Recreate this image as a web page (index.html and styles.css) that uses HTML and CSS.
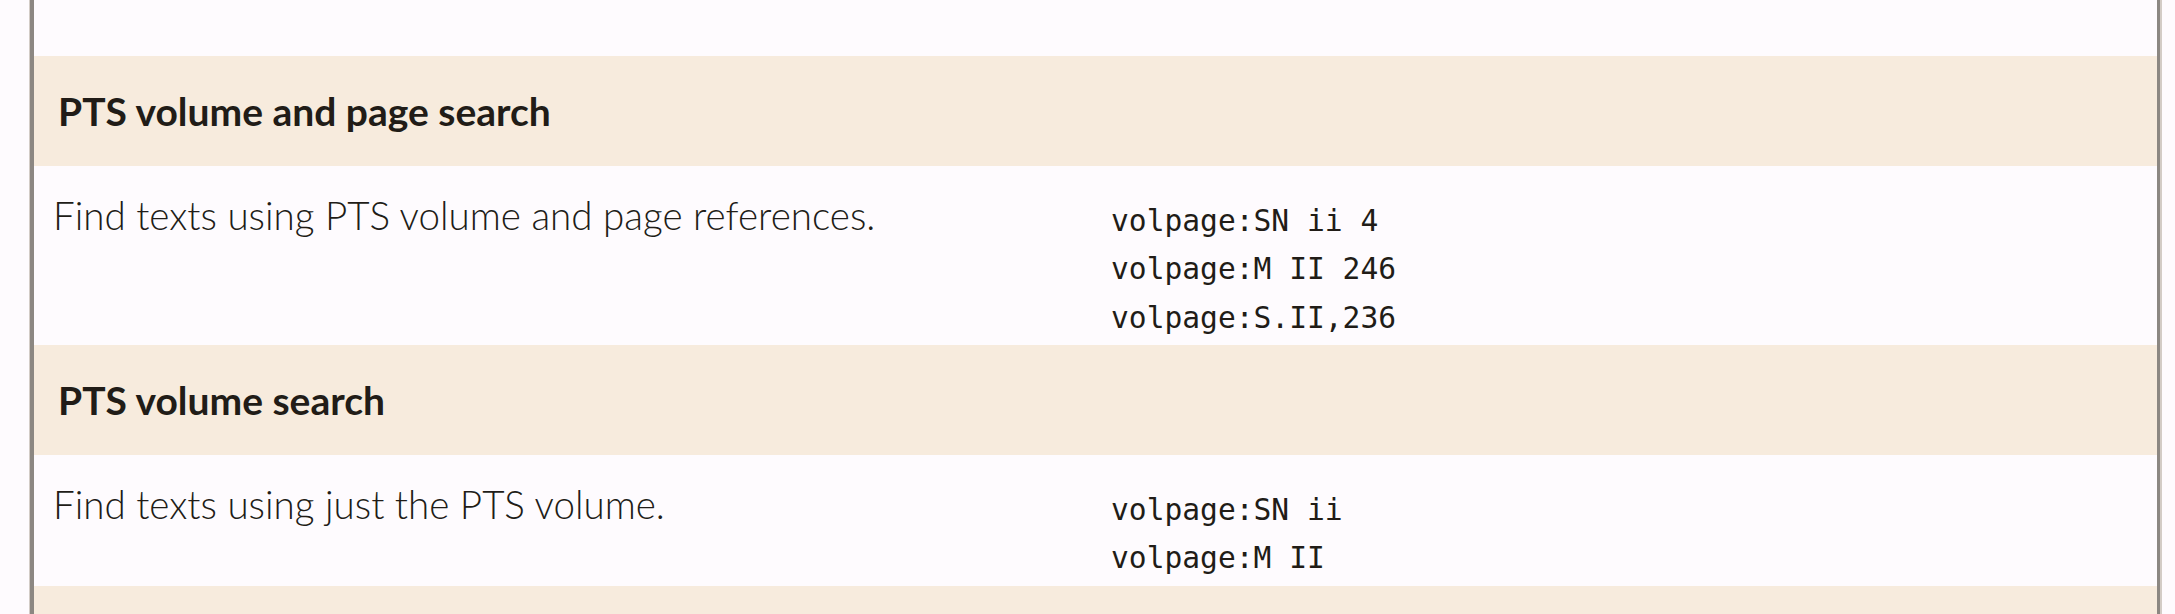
FILE: index.html
```
<!DOCTYPE html>
<html lang="en">
<head>
<meta charset="utf-8">
<title>Search help</title>
<link rel="stylesheet" href="styles.css">
</head>
<body>
<div class="frame">
  <div class="panel">
    <div class="row-tail"></div>
    <div class="head"><h3>PTS volume and page search</h3></div>
    <div class="row">
      <p class="desc">Find texts using PTS volume and page references.</p>
      <div class="examples">
        <code>volpage:SN ii 4</code>
        <code>volpage:M II 246</code>
        <code>volpage:S.II,236</code>
      </div>
    </div>
    <div class="head"><h3>PTS volume search</h3></div>
    <div class="row">
      <p class="desc">Find texts using just the PTS volume.</p>
      <div class="examples">
        <code>volpage:SN ii</code>
        <code>volpage:M II</code>
      </div>
    </div>
    <div class="head head-next"></div>
  </div>
</div>
</body>
</html>
```

FILE: styles.css
```
html, body {
  margin: 0;
  padding: 0;
  background: #fefbfe;
  overflow: hidden;
}
body {
  height: 614px;
  color: #211c17;
  font-family: "Lato", "Open Sans", sans-serif;
}
.frame {
  margin-left: 29px;
  width: 2130px;
  border-left: 1px solid #d3ccc6;
  border-right: 2px solid #d3ccc6;
}
.panel {
  border-left: 4px solid #8c8782;
  border-right: 3px solid #8c8782;
}
.row-tail {
  height: 56px;
}
.head {
  background: #f7ebdd;
  height: 110px;
  display: flex;
  align-items: center;
  padding-left: 24px;
}
.head h3 {
  margin: 0;
  font-size: 39px;
  font-weight: 700;
  line-height: 1;
}
.row {
  display: grid;
  grid-template-columns: 1056px 1fr;
}
.desc {
  margin: 0;
  padding: 25px 0 0 19px;
  font-size: 38.6px;
  font-weight: 300;
  line-height: 48px;
}
.examples {
  display: flex;
  flex-direction: column;
  padding: 30.5px 0 2.5px 21px;
}
.examples code {
  font-family: "DejaVu Sans Mono", monospace;
  font-size: 29.6px;
  line-height: 48.7px;
  white-space: pre;
}
```
